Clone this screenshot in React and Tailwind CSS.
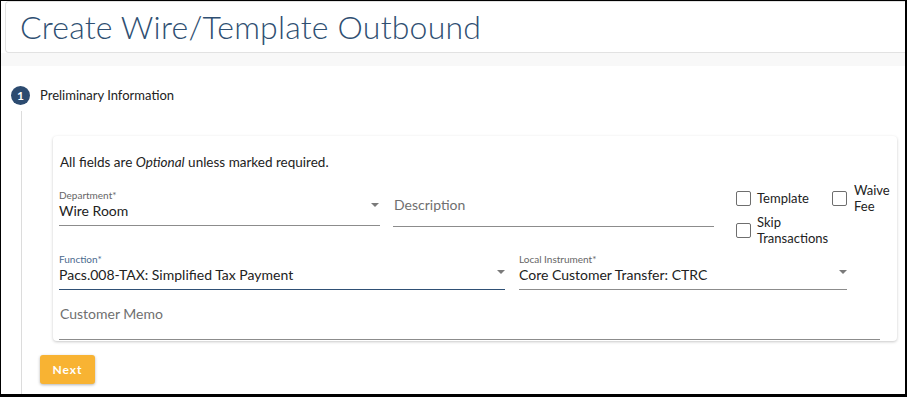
import React from "react";

const Arrow = () => (
  <svg width="8" height="4" viewBox="0 0 8 4" className="block">
    <polygon points="0,0 8,0 4,4" fill="#7a7a7a" />
  </svg>
);

const Checkbox = () => (
  <span className="block w-[15px] h-[15px] border border-[#6e6e6e] rounded-[2px] bg-white shrink-0" />
);

export default function App() {
  return (
    <div
      className="w-[907px] h-[397px] bg-white border-t border-l border-r-2 border-b-[3px] border-black overflow-hidden flex flex-col"
      style={{ fontFamily: "Lato, 'Open Sans', sans-serif" }}
    >
      {/* Header */}
      <div className="ml-[4px] h-[52px] shrink-0 border border-r-0 border-[#e2e2e2] rounded-l-[4px] bg-white flex items-center pl-[14px]">
        <h1 className="text-[32px] font-light text-[#2f4f72] leading-none tracking-[0.2px]">
          Create Wire/Template Outbound
        </h1>
      </div>
      <div className="h-[13px] shrink-0 bg-[#f8f8f8]" />

      {/* Step header */}
      <div className="mt-[20px] flex items-center pl-[10px] gap-[10px] h-[19px]">
        <span className="w-[19px] h-[19px] rounded-full bg-[#2c4b70] text-white text-[12px] font-bold flex items-center justify-center leading-none">
          1
        </span>
        <span className="text-[13px] text-[#222]">Preliminary Information</span>
      </div>

      {/* Step content */}
      <div className="ml-[20px] mt-[6px] flex-1 border-l border-[#dcdcdc] pt-[25px]">
        <div className="ml-[31px] w-[844px] h-[205px] bg-white rounded-[4px] shadow-[0_1px_3px_rgba(0,0,0,0.22)] pl-[6px] pr-[8px] pt-[17px]">
          <p className="text-[13.5px] leading-[18px] text-[#222] pl-[1px]">
            All fields are <em>Optional</em> unless marked required.
          </p>

          {/* Row 1 */}
          <div className="mt-[11px] flex items-start">
            <div className="w-[321px] shrink-0 pt-[7px]">
              <div className="border-b border-[#8c8c8c] pb-[5px]">
                <div className="text-[10px] leading-[12px] text-[#666]">Department*</div>
                <div className="mt-[1px] flex items-center justify-between">
                  <span className="text-[14px] leading-[18px] text-[#222]">Wire Room</span>
                  <span className="-mt-[13px] mr-[1px]"><Arrow /></span>
                </div>
              </div>
            </div>
            <div className="ml-[13px] w-[321px] shrink-0 pt-[7px]">
              <div className="border-b border-[#8c8c8c] h-[38px] flex items-end pb-[12px]">
                <span className="text-[14px] leading-[18px] text-[#6f6f6f] pl-[1px]">Description</span>
              </div>
            </div>
            <div className="ml-[22px] shrink-0 grid grid-cols-[96px_auto] text-[13px] leading-[16px] text-[#222]">
              <div className="flex items-center gap-[6px] h-[32px]">
                <Checkbox />
                <span>Template</span>
              </div>
              <div className="flex items-center gap-[7px] h-[32px]">
                <Checkbox />
                <span>
                  Waive
                  <br />
                  Fee
                </span>
              </div>
              <div className="flex items-center gap-[6px] h-[32px] col-span-2">
                <Checkbox />
                <span>
                  Skip
                  <br />
                  Transactions
                </span>
              </div>
            </div>
          </div>

          {/* Row 2 */}
          <div className="mt-[7px] flex items-start">
            <div className="w-[446px] shrink-0 border-b border-[#2f5075] pb-[5px]">
              <div className="text-[10px] leading-[12px] text-[#4b6a8e]">Function*</div>
              <div className="mt-[1px] flex items-center justify-between">
                <span className="text-[14px] leading-[18px] text-[#222]">
                  Pacs.008-TAX: Simplified Tax Payment
                </span>
                <span className="-mt-[7px]"><Arrow /></span>
              </div>
            </div>
            <div className="ml-[14px] w-[328px] shrink-0 border-b border-[#8c8c8c] pb-[5px]">
              <div className="text-[10px] leading-[12px] text-[#666]">Local Instrument*</div>
              <div className="mt-[1px] flex items-center justify-between">
                <span className="text-[14px] leading-[18px] text-[#222]">
                  Core Customer Transfer: CTRC
                </span>
                <span className="-mt-[7px]"><Arrow /></span>
              </div>
            </div>
          </div>

          {/* Row 3 */}
          <div className="w-[821px] pt-[11px] pb-[14px] border-b border-[#8c8c8c]">
            <span className="text-[14px] leading-[18px] text-[#6f6f6f] pl-[1px]">Customer Memo</span>
          </div>
        </div>

        <button className="mt-[14px] ml-[18px] w-[55px] h-[29px] rounded-[3px] bg-[#f8b333] text-white text-[12px] font-bold tracking-[1px] shadow-[0_1px_3px_rgba(0,0,0,0.3)]">
          Next
        </button>
      </div>
    </div>
  );
}
